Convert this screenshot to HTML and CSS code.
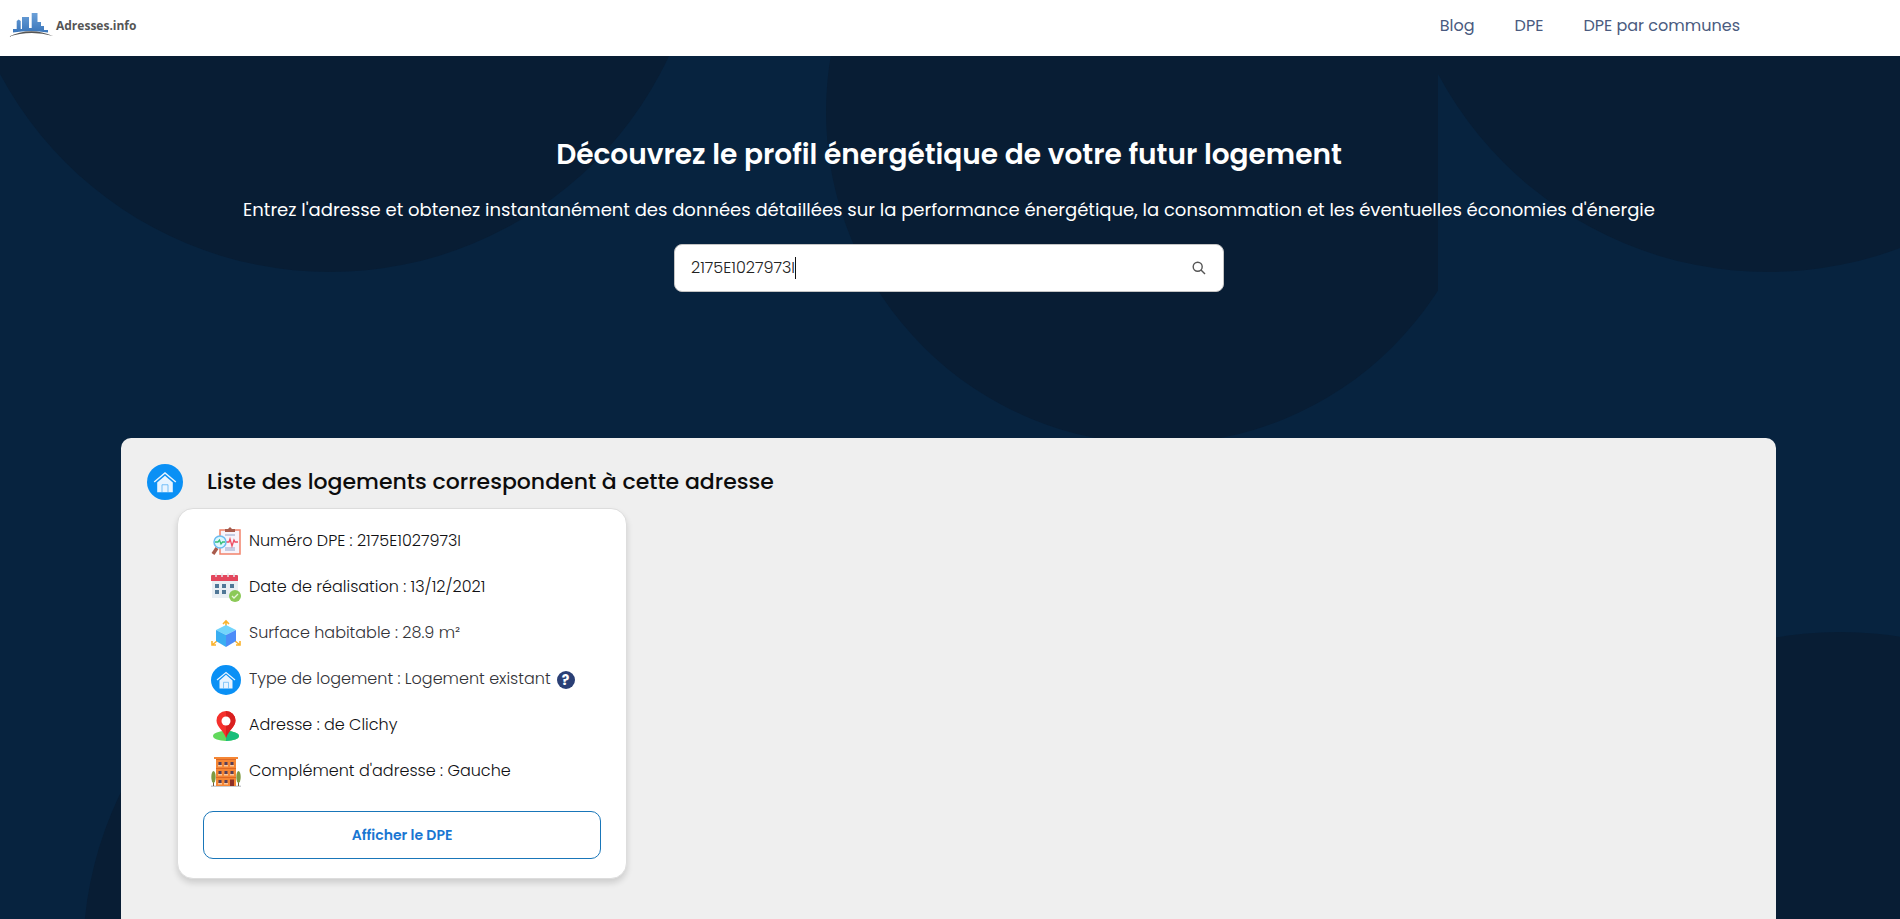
FILE: index.html
```html
<!DOCTYPE html>
<html lang="fr">
<head>
<meta charset="utf-8">
<meta name="viewport" content="width=device-width, initial-scale=1">
<title>Adresses.info</title>
<link rel="stylesheet" href="styles.css">
</head>
<body>
<header class="topbar">
  <a class="brand" href="#">
    <svg class="brand-mark" viewBox="0 0 46 26" aria-hidden="true">
      <defs><linearGradient id="sky" x1="0" y1="0" x2="0" y2="1"><stop offset="0" stop-color="#6ba0d8"/><stop offset="1" stop-color="#3a76bb"/></linearGradient></defs>
      <path d="M5 20.500V17h3.700V9l2-1.500 2 1.500v8H14V5h7v11h2.700V1h5.800v9H33v4h3v4h4v2.500q-18-3-35 0z" fill="url(#sky)"/>
      <path d="M0 25Q22 14 45 24Q22 17.500 0 25z" fill="#555"/>
    </svg>
    <span>Adresses.info</span>
  </a>
  <nav class="menu">
    <a href="#">Blog</a>
    <a href="#">DPE</a>
    <a href="#">DPE par communes</a>
  </nav>
</header>

<main class="page">
  <svg class="backdrop" viewBox="0 0 1900 863" preserveAspectRatio="xMidYMin slice" aria-hidden="true">
    <defs>
      <clipPath id="centre"><rect x="800" y="0" width="638" height="500"/></clipPath>
      <clipPath id="right"><rect x="1438" y="0" width="462" height="500"/></clipPath>
    </defs>
    <g fill="#081d34">
      <circle cx="330" cy="-158" r="374"/>
      <circle cx="1158" cy="56" r="332" clip-path="url(#centre)"/>
      <circle cx="1768" cy="-158" r="374" clip-path="url(#right)"/>
      <circle cx="457" cy="900" r="374"/>
      <circle cx="1840" cy="950" r="374"/>
    </g>
  </svg>

  <section class="hero">
    <h1>Découvrez le profil énergétique de votre futur logement</h1>
    <p>Entrez l'adresse et obtenez instantanément des données détaillées sur la performance énergétique, la consommation et les éventuelles économies d'énergie</p>
    <form class="search">
      <input type="text" value="2175E1027973I" aria-label="Adresse">
      <span class="caret"></span>
      <button type="button" aria-label="Rechercher">
        <svg viewBox="0 0 14 14" aria-hidden="true"><circle cx="5.700" cy="5.700" r="4.500"/><path d="M9 9l4 4"/></svg>
      </button>
    </form>
  </section>

  <section class="results">
    <div class="results-head">
      <svg class="head-icon" viewBox="0 0 30 30" aria-hidden="true">
        <circle cx="15" cy="15" r="15" fill="#0a90f5"/>
        <path d="M6 15L15 7.500L24 15" fill="none" stroke="#e8f4ff" stroke-width="1.200"/>
        <path d="M8.500 15.500l6.500-5.700 6.500 5.700V23.500h-13z" fill="#e8f4ff"/>
        <path d="M12.500 23.500V17.300h5v6.200" fill="none" stroke="#5db4f7" stroke-width=".7"/>
      </svg>
      <h2>Liste des logements correspondent à cette adresse</h2>
    </div>
    <article class="card">
      <ul class="facts">
        <li>
          <svg viewBox="0 0 30 30" aria-hidden="true">
            <path d="M9 3h20v24H9z" fill="#f7f3fa" stroke="#f2836b" stroke-width="1.500"/>
            <path d="M14 2h3l2-2 2 2h3v3H14z" fill="#a85b4c"/>
            <path d="M14 7h10v2H14zM14 20h10v4H14z" fill="#c5cbe2"/>
            <path d="M15 15h3l1-3 2 7 2-6 1 2h3" fill="none" stroke="#ef4d62" stroke-width="1.300"/>
            <path d="M6 21l-4 6" stroke="#a85b4c" stroke-width="3.500"/>
            <circle cx="9" cy="15" r="6" fill="#dcf7ff" stroke="#6bbcf0" stroke-width="1.500"/>
            <path d="M4 15h3l1.500-2 1.500 4 1.500-2H14" fill="none" stroke="#35bd78" stroke-width="1.300"/>
          </svg>
          <span>Numéro DPE : 2175E1027973I</span>
        </li>
        <li>
          <svg viewBox="0 0 30 30" aria-hidden="true">
            <path d="M1 7h26v18H1z" fill="#e9eff4"/><path d="M0 3q0-1 1-1h25q1 0 1 1v5H0z" fill="#e3475d"/>
            <path d="M5 0v4M11 0v4M17 0v4M23 0v4" stroke="#e6e9ed" stroke-width="1.500"/>
            <path d="M4 11h4v4H4zM11 11h4v4h-4zM19 11h4v4h-4zM4 17h4v4H4zM11 17h4v4h-4z" fill="#4f7797"/>
            <circle cx="24" cy="23" r="6" fill="#8bc957"/><path d="M21 23l2 2 4-4" fill="none" stroke="#e6f5d8" stroke-width="1.300"/>
          </svg>
          <span>Date de réalisation : 13/12/2021</span>
        </li>
        <li class="soft">
          <svg viewBox="0 0 30 30" aria-hidden="true">
            <path d="M15 8V3M12 5L15 2 18 5M6 22l-5 4M1 22v4h4M24 22l5 4M25 26h4v-4" fill="none" stroke="#fbb32d" stroke-width="1.600"/>
            <path d="M15 6l10 5-10 5-10-5z" fill="#72d5fc"/><path d="M5 11l10 5v12L5 22z" fill="#39aef2"/><path d="M25 11l-10 5v12l10-6z" fill="#4c8cf8"/>
          </svg>
          <span>Surface habitable : 28.9 m²</span>
        </li>
        <li class="soft">
          <svg viewBox="0 0 30 30" aria-hidden="true">
            <circle cx="15" cy="15" r="15" fill="#0a90f5"/>
            <path d="M6 15L15 7.500L24 15" fill="none" stroke="#e8f4ff" stroke-width="1.200"/>
            <path d="M8.500 15.500l6.500-5.700 6.500 5.700V23.500h-13z" fill="#e8f4ff"/>
            <path d="M12.500 23.500V17.300h5v6.200" fill="none" stroke="#5db4f7" stroke-width=".7"/>
          </svg>
          <span>Type de logement : Logement existant</span>
          <button class="help" type="button" aria-label="Aide">?</button>
        </li>
        <li>
          <svg viewBox="0 0 30 30" aria-hidden="true">
            <ellipse cx="15" cy="25" rx="13" ry="5" fill="#62d95c"/>
            <path d="M15 20a13 5 0 0 1 0 10z" fill="#19bd7b"/>
            <path d="M15 27C13 20 5.500 16 5.500 9.500a9.500 9.500 0 0 1 19 0C24.500 16 17 20 15 27z" fill="#f5302c"/>
            <path d="M15 0a9.500 9.500 0 0 1 9.500 9.500C24.500 16 17 20 15 27z" fill="#d91f1f"/><circle cx="15" cy="10" r="4.500" fill="#fff"/>
          </svg>
          <span>Adresse : de Clichy</span>
        </li>
        <li>
          <svg viewBox="0 0 30 30" aria-hidden="true">
            <path d="M0 28.500h30V30H0z" fill="#c9cdd2"/><path d="M2.500 18v11M27.500 18v11" stroke="#765b38" stroke-width="1"/>
            <ellipse cx="2.500" cy="20" rx="2.200" ry="6" fill="#7e9a42"/><ellipse cx="27.500" cy="20" rx="2.200" ry="6" fill="#7e9a42"/>
            <path d="M3 0h24v2h-2v27H5V2H3z" fill="#f58634"/><path d="M5 2h20v1H5zM5 11h20v1H5zM5 20h20v1H5z" fill="#dc6724"/>
            <path d="M7.500 5h3v3h-3zM13.500 5h3v3h-3zM19.500 5h3v3h-3zM7.500 14h3v3h-3zM13.500 14h3v3h-3zM19.500 14h3v3h-3zM7.500 23h3v3h-3zM13.500 23h3v3h-3z" fill="#55405b"/>
            <path d="M7 8h4v1.500H7zM13 8h4v1.500h-4zM19 8h4v1.500h-4zM7 17h4v1.500H7zM13 17h4v1.500h-4zM19 17h4v1.500h-4zM7 26h4v1.500H7zM13 26h4v1.500h-4z" fill="#f9c69c"/>
            <path d="M19 22.500h4V29h-4z" fill="#8e3026"/>
          </svg>
          <span>Complément d'adresse : Gauche</span>
        </li>
      </ul>
      <button class="show" type="button">Afficher le DPE</button>
    </article>
  </section>
</main>
</body>
</html>
```
FILE: styles.css
```css
* {
  box-sizing: border-box;
}

body {
  margin: 0;
  display: flex;
  flex-direction: column;
  min-height: 100vh;
  overflow: hidden;
  font-family: Poppins, Inter, "Noto Sans", sans-serif;
  font-size: 16px;
  color: #111114;
  background: #07233f;
}

.topbar {
  display: flex;
  align-items: center;
  justify-content: space-between;
  height: 56px;
  padding: 0 160px 6px 8px;
  background: #fff;
}

.brand {
  display: flex;
  align-items: center;
  gap: 2px;
  color: #555;
  font-family: "Open Sans", sans-serif;
  font-size: 12px;
  font-weight: 700;
  text-decoration: none;
}

.brand-mark {
  width: 46px;
  height: 26px;
}

.menu {
  display: flex;
  gap: 40px;
}

.menu a {
  color: #4a5b80;
  text-decoration: none;
}

.page {
  position: relative;
  flex: 1;
  display: flex;
  flex-direction: column;
}

.backdrop {
  position: absolute;
  inset: 0;
  width: 100%;
  height: 100%;
}

.hero {
  position: relative;
  display: flex;
  flex-direction: column;
  align-items: center;
  height: 382px;
  padding: 79px 24px 0 22px;
  color: #fff;
  text-align: center;
}

.hero h1 {
  margin: 0;
  font-size: 28px;
  font-weight: 600;
  line-height: 40px;
}

.hero p {
  margin: 20px 0 19px;
  font-size: 18px;
  line-height: 30px;
}

.search {
  display: flex;
  align-items: center;
  width: 550px;
  max-width: 100%;
  height: 48px;
  padding: 0 16px;
  border: 1px solid #c4c4c4;
  border-radius: 8px;
  background: #fff;
}

.search input {
  field-sizing: content;
  min-width: 0;
  height: 32px;
  padding: 0 0 2px;
  border: 0;
  outline: 0;
  background: none;
  color: #222;
  font: inherit;
  font-weight: 300;
}

.caret {
  width: 1px;
  height: 22px;
  background: #111;
}

.search button {
  display: flex;
  margin-left: auto;
  padding: 1px;
  border: 0;
  background: none;
}

.search svg {
  width: 14px;
  height: 14px;
  fill: none;
  stroke: #555;
  stroke-width: 1.4;
}

.results {
  position: relative;
  flex: 1;
  margin: 0 124px 0 121px;
  padding: 26px 26px 39px;
  border-radius: 10px 10px 0 0;
  background: #efefef;
}

.results-head {
  display: flex;
  align-items: center;
  gap: 24px;
}

.head-icon {
  width: 36px;
  height: 36px;
}

.results h2 {
  margin: 0;
  color: #0c0c0c;
  font-size: 22px;
  font-weight: 500;
  line-height: 36px;
}

.card {
  width: 450px;
  max-width: 100%;
  margin: 8px 0 0 30px;
  padding: 10px 25px 19px;
  border: 1px solid #ddd;
  border-radius: 16px;
  background: #fff;
  box-shadow: 0 4px 6px rgba(0, 0, 0, 0.14);
}

.facts {
  margin: 0 0 16px;
  padding: 0 0 0 8px;
  list-style: none;
}

.facts li {
  display: flex;
  align-items: center;
  gap: 8px;
  height: 46px;
  font-weight: 300;
}

.facts span {
  padding-bottom: 3px;
}

.facts li > svg {
  flex: none;
  width: 30px;
  height: 30px;
}

.facts .soft {
  color: #333338;
}

.help {
  width: 18px;
  height: 18px;
  margin-left: -2px;
  padding: 0;
  border: 0;
  border-radius: 50%;
  background: #2a3f75;
  color: #fff;
  font: inherit;
  font-size: 14px;
  font-weight: 700;
  line-height: 18px;
}

.show {
  display: block;
  width: 100%;
  height: 48px;
  border: 1px solid #1976b9;
  border-radius: 10px;
  background: #fff;
  color: #1976d2;
  font: inherit;
  font-size: 14px;
  font-weight: 600;
}
```
